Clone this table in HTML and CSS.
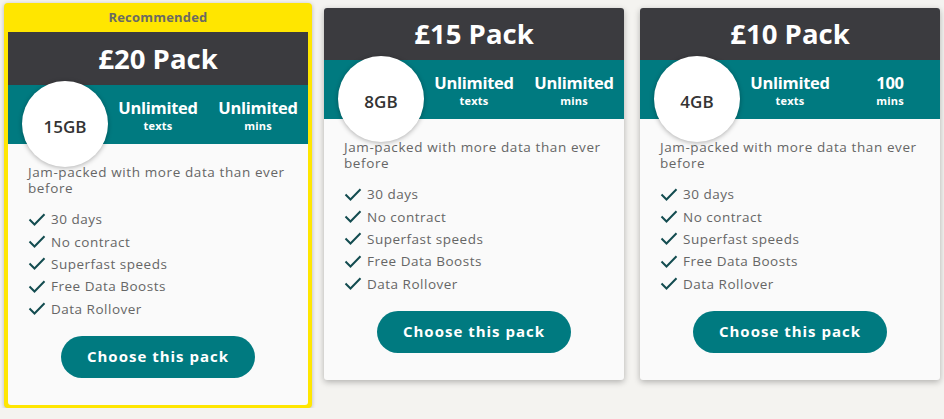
FILE: index.html
```html
<!DOCTYPE html>
<html lang="en">
<head>
<meta charset="utf-8">
<title>Packs</title>
<link rel="stylesheet" href="styles.css">
</head>
<body>
<div class="packs">
  <div class="recommended">
    <div class="rec-label">Recommended</div>
    <div class="card">
      <div class="card-head">£20 Pack</div>
      <div class="band">
        <div class="data">15GB</div>
        <div class="col"><span class="val">Unlimited</span><span class="lbl">texts</span></div>
        <div class="col"><span class="val">Unlimited</span><span class="lbl">mins</span></div>
      </div>
      <div class="card-body">
        <p class="desc">Jam-packed with more data than ever before</p>
        <ul class="features">
          <li><svg class="tick" viewBox="0 0 18 13"><path d="M1.5 6.5 L6.5 11.5 L16.5 1.2"/></svg>30 days</li>
          <li><svg class="tick" viewBox="0 0 18 13"><path d="M1.5 6.5 L6.5 11.5 L16.5 1.2"/></svg>No contract</li>
          <li><svg class="tick" viewBox="0 0 18 13"><path d="M1.5 6.5 L6.5 11.5 L16.5 1.2"/></svg>Superfast speeds</li>
          <li><svg class="tick" viewBox="0 0 18 13"><path d="M1.5 6.5 L6.5 11.5 L16.5 1.2"/></svg>Free Data Boosts</li>
          <li><svg class="tick" viewBox="0 0 18 13"><path d="M1.5 6.5 L6.5 11.5 L16.5 1.2"/></svg>Data Rollover</li>
        </ul>
        <button class="choose">Choose this pack</button>
      </div>
    </div>
  </div>

  <div class="card shadowed">
    <div class="card-head">£15 Pack</div>
    <div class="band">
      <div class="data">8GB</div>
      <div class="col"><span class="val">Unlimited</span><span class="lbl">texts</span></div>
      <div class="col"><span class="val">Unlimited</span><span class="lbl">mins</span></div>
    </div>
    <div class="card-body">
      <p class="desc">Jam-packed with more data than ever before</p>
      <ul class="features">
        <li><svg class="tick" viewBox="0 0 18 13"><path d="M1.5 6.5 L6.5 11.5 L16.5 1.2"/></svg>30 days</li>
        <li><svg class="tick" viewBox="0 0 18 13"><path d="M1.5 6.5 L6.5 11.5 L16.5 1.2"/></svg>No contract</li>
        <li><svg class="tick" viewBox="0 0 18 13"><path d="M1.5 6.5 L6.5 11.5 L16.5 1.2"/></svg>Superfast speeds</li>
        <li><svg class="tick" viewBox="0 0 18 13"><path d="M1.5 6.5 L6.5 11.5 L16.5 1.2"/></svg>Free Data Boosts</li>
        <li><svg class="tick" viewBox="0 0 18 13"><path d="M1.5 6.5 L6.5 11.5 L16.5 1.2"/></svg>Data Rollover</li>
      </ul>
      <button class="choose">Choose this pack</button>
    </div>
  </div>

  <div class="card shadowed">
    <div class="card-head">£10 Pack</div>
    <div class="band">
      <div class="data">4GB</div>
      <div class="col"><span class="val">Unlimited</span><span class="lbl">texts</span></div>
      <div class="col"><span class="val">100</span><span class="lbl">mins</span></div>
    </div>
    <div class="card-body">
      <p class="desc">Jam-packed with more data than ever before</p>
      <ul class="features">
        <li><svg class="tick" viewBox="0 0 18 13"><path d="M1.5 6.5 L6.5 11.5 L16.5 1.2"/></svg>30 days</li>
        <li><svg class="tick" viewBox="0 0 18 13"><path d="M1.5 6.5 L6.5 11.5 L16.5 1.2"/></svg>No contract</li>
        <li><svg class="tick" viewBox="0 0 18 13"><path d="M1.5 6.5 L6.5 11.5 L16.5 1.2"/></svg>Superfast speeds</li>
        <li><svg class="tick" viewBox="0 0 18 13"><path d="M1.5 6.5 L6.5 11.5 L16.5 1.2"/></svg>Free Data Boosts</li>
        <li><svg class="tick" viewBox="0 0 18 13"><path d="M1.5 6.5 L6.5 11.5 L16.5 1.2"/></svg>Data Rollover</li>
      </ul>
      <button class="choose">Choose this pack</button>
    </div>
  </div>
</div>
</body>
</html>
```

FILE: styles.css
```css
html, body {
  margin: 0;
  padding: 0;
  background: #f4f3f0;
  font-family: "Open Sans", "Liberation Sans", sans-serif;
}

.packs {
  display: flex;
  align-items: flex-start;
  gap: 16px;
  padding: 8px 0 0 8px;
}

.recommended {
  width: 300px;
  margin: -5px -4px 0 -4px;
  padding: 0 4px 3px 4px;
  background: #ffe600;
  border-radius: 4px;
  box-shadow: 0 1px 4px rgba(0, 0, 0, 0.25);
  flex: none;
}

.rec-label {
  height: 29px;
  line-height: 29px;
  text-align: center;
  font-size: 13px;
  font-weight: 700;
  color: #6b6a62;
  letter-spacing: 0.2px;
}

.card {
  width: 300px;
  flex: none;
  background: #fafafa;
  border-radius: 3px;
}

.shadowed {
  box-shadow: 0 2px 6px rgba(0, 0, 0, 0.28);
}

.card-head {
  height: 52px;
  line-height: 52px;
  background: #3b3b3f;
  color: #fff;
  text-align: center;
  font-size: 27.5px;
  font-weight: 700;
  border-radius: 3px 3px 0 0;
}

.recommended .card-head {
  height: 53px;
  line-height: 53px;
  border-radius: 0;
}

.band {
  position: relative;
  height: 59px;
  background: #007a80;
  display: grid;
  grid-template-columns: 100px 100px 100px;
  color: #fff;
}

.col {
  display: flex;
  flex-direction: column;
  align-items: center;
  justify-content: center;
  gap: 1px;
}

.band .col:nth-of-type(2) {
  grid-column: 2;
}

.band .col:nth-of-type(3) {
  grid-column: 3;
}

.val {
  font-size: 16.5px;
  font-weight: 700;
  line-height: 21px;
  letter-spacing: -0.3px;
}

.lbl {
  font-size: 11px;
  font-weight: 700;
  line-height: 14px;
  letter-spacing: 0.2px;
}

.data {
  position: absolute;
  left: 14px;
  top: -4px;
  width: 86px;
  height: 86px;
  border-radius: 50%;
  background: #fff;
  box-shadow: 0 1px 5px rgba(0, 0, 0, 0.3);
  color: #333;
  font-size: 17px;
  font-weight: 600;
  display: flex;
  align-items: center;
  justify-content: center;
  padding-top: 4px;
  box-sizing: border-box;
  z-index: 1;
}

.card-body {
  padding: 20px 20px 27px 20px;
  display: flex;
  flex-direction: column;
}

.desc {
  margin: 0;
  font-size: 13.5px;
  line-height: 16px;
  color: #666;
  letter-spacing: 0.6px;
}

.features {
  list-style: none;
  margin: 12px 0 0 0;
  padding: 0;
}

.features li {
  display: flex;
  align-items: center;
  height: 22.4px;
  font-size: 13.5px;
  color: #666;
  letter-spacing: 0.5px;
}

.tick {
  width: 18px;
  height: 13px;
  margin-right: 5px;
  flex: none;
}

.tick path {
  fill: none;
  stroke: #134c50;
  stroke-width: 2;
}

.choose {
  align-self: center;
  margin-top: 16px;
  width: 194px;
  height: 42px;
  border: none;
  border-radius: 21px;
  background: #007a80;
  color: #fff;
  font-family: inherit;
  font-size: 15px;
  font-weight: 700;
  letter-spacing: 1px;
  padding: 0 0 2px 0;
  cursor: pointer;
}
```
